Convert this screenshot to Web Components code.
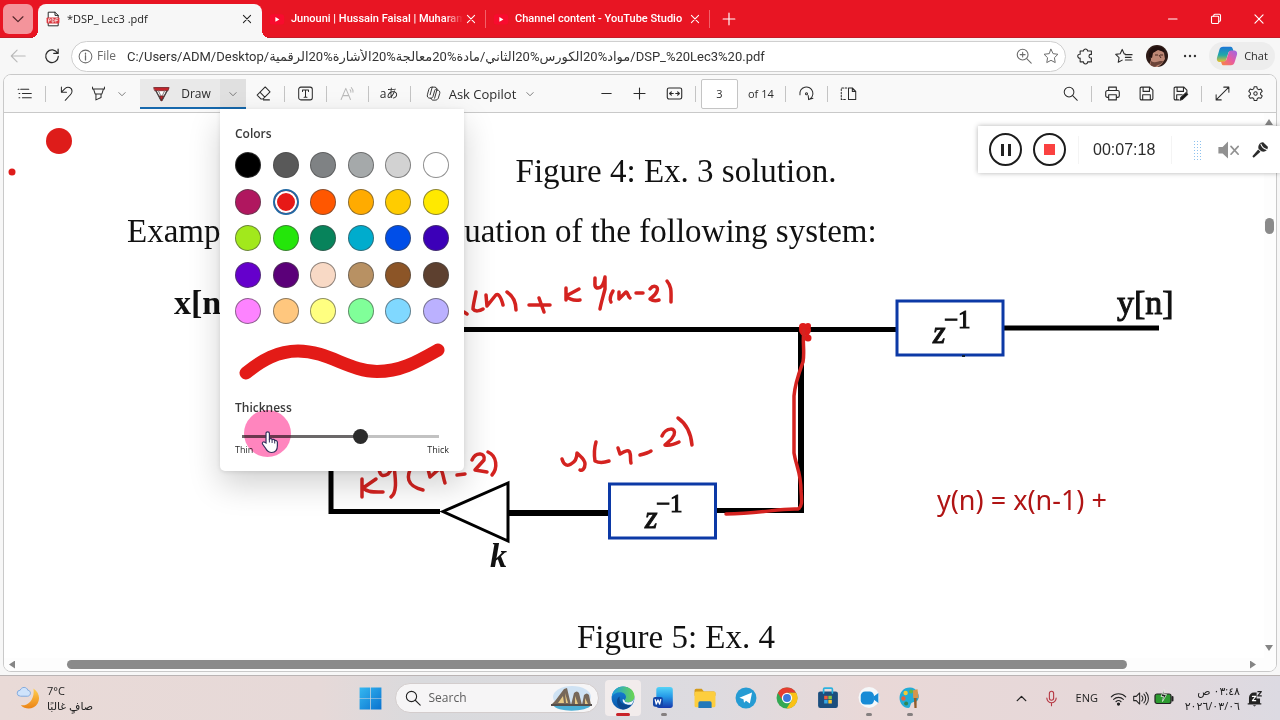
<!DOCTYPE html>
<html lang="en">
<head>
<meta charset="utf-8">
<meta name="viewport" content="width=device-width, initial-scale=1">
<title>DSP_ Lec3 .pdf</title>
<style>
  html, body { margin: 0; height: 100%; }
  body { font: 12px/16px "Open Sans", "Noto Sans", "DejaVu Sans", sans-serif; color: #2b2b2b; background: #f7f7f7; overflow: hidden; }
</style>
</head>
<body>
<browser-window></browser-window>
<script>
const RESET = `
  *, *::before, *::after { box-sizing: border-box; }
  button { font: inherit; color: inherit; background: none; border: 0; padding: 0; margin: 0; display: flex; align-items: center; justify-content: center; }
  input { font: inherit; color: inherit; margin: 0; }
`;
function define(name, css, html) {
  customElements.define(name, class extends HTMLElement {
    constructor() {
      super();
      this.attachShadow({ mode: 'open' });
    }
    connectedCallback() {
      if (this.shadowRoot.childNodes.length) return;
      const markup = typeof html === 'function' ? html(this) : html;
      this.shadowRoot.innerHTML = `<style>${RESET}${css}</style>${markup}`;
    }
  });
}

/* ---------- icons: inner SVG on a 20 x 20 grid ---------- */
const ICONS = {
  down: '<path d="M5.500 8 10 12.500 14.500 8" stroke="#666"/>',
  bigdown: '<path d="M4.500 7.500 10 13l5.500-5.500" stroke-width="1.300"/>',
  up: '<path d="M5 12.500 10 7.500l5 5" stroke-width="1.600"/>',
  close: '<path d="m5.500 5.500 9 9m0-9-9 9" stroke-width="1.300"/>',
  pdf: '<path d="M4.500 1.500h8l4 4v13h-12z" fill="#fff" stroke="#222"/><path d="M12.500 1.500v4h4"/><rect x="2" y="8" width="16" height="7.500" rx="1" fill="#d9383f" stroke="none"/><path d="M4.500 14V9.700h1.300a1.200 1.200 0 0 1 0 2.400H4.500M9 9.700V14h.8a1.700 1.700 0 0 0 1.700-1.700v-.9a1.700 1.700 0 0 0-1.700-1.700zM13.500 14V9.700h2.500m-2.500 2.200h2" stroke="#fff" stroke-width=".9"/>',
  yt: '<rect x="1" y="4" width="18" height="13" rx="4" fill="#f80b2e" stroke="none"/><path d="m8 7.500 5 3-5 3z" fill="#fff" stroke="none"/>',
  plus: '<path d="M10 3.500v13M3.500 10h13" stroke-width="1.300"/>',
  minus: '<path d="M4.500 10h11" stroke-width="1.300"/>',
  winmin: '<path d="M5 10h9.500"/>',
  restore: '<rect x="5" y="7" width="8" height="8" rx="1"/><path d="M7.500 7V6a1.200 1.200 0 0 1 1.200-1.200h5.100A1.200 1.200 0 0 1 15 6v5.300a1.200 1.200 0 0 1-1.200 1.200H13"/>',
  back: '<path d="M18 10H2.500M9 3.500 2.500 10 9 16.500"/>',
  refresh: '<path d="M16.200 7A7 7 0 1 0 17 10.500M16.800 2.500V7.200H12" stroke-width="1.400"/>',
  info: '<circle cx="10" cy="10" r="7.500"/><path d="M10 9v5M10 6v1.300" stroke-width="1.500"/>',
  zoomin: '<circle cx="8.500" cy="8.500" r="6"/><path d="m13 13 5 5M5.800 8.500h5.400M8.500 5.800v5.400"/>',
  star: '<path d="m10 2.500 2.300 4.900 5.400.7-3.900 3.800.9 5.400-4.700-2.500-4.700 2.500.9-5.400-3.900-3.800 5.400-.7z" stroke-width="1.100"/>',
  favs: '<path d="M11.500 7.700h-1.200L8 2.700 5.800 7.500l-5 .7 3.700 3.600-.9 5.200L8 14.600M11.500 8.500H19M11.500 11.500H18M11.500 14.500H19"/>',
  ext: '<path d="M3.500 4.500h3.700a2.300 2.300 0 1 1 4.600 0h4.200v3.700h-.7a2 2 0 1 0 0 4h.7v4.300h-4.200a2.300 2.300 0 1 1-4.600 0H3.500v-4.100a2.200 2.200 0 1 1 0-4.300z" stroke-width="1.200"/>',
  dots: '<g fill="#333" stroke="none"><circle cx="4.500" cy="10" r="1.300"/><circle cx="10" cy="10" r="1.300"/><circle cx="15.500" cy="10" r="1.300"/></g>',
  list: '<path d="M5.500 5H15M7.500 10H18M7.500 15H18M2.500 5h1M3.500 10h1M3.500 15h1" stroke-width="1.200"/>',
  undo: '<path d="M4 2.500V8.500h6M4.300 8.200 8.500 4c3-2.700 8-1 8 3.300 0 1.700-.8 3-2 4.200L8.500 18"/>',
  marker: '<path d="M3 2.500v2.200h14V2.500M4.200 4.800 6 10.500h8l1.800-5.700M7 10.500v7l6-2.700v-4.300"/>',
  pen: '<path d="M2 3.500h16L10.700 18H9.300z" fill="#fff"/><path d="M1 3h18l-1.300 3.700H2.300z" fill="#c4252c" stroke="#72262a" stroke-width=".8"/><path d="M7.700 13h4.600L10 18.500z" fill="#c4252c" stroke="#722"/><path d="M3.200 6.700 9 17.500M16.800 6.700 11 17.500" stroke="#514949"/><path d="M6.500 7 9 12.500M13.500 7 11 12.500" stroke="#8a8484"/>',
  eraser: '<path d="m12 2.300 5.700 5.700-8.500 8.500H7.200L2.500 11.800zM5.800 8.500l5.700 5.700M10 17.500h7"/>',
  text: '<rect x="2" y="2.500" width="16" height="15" rx="2.500"/><path d="M6.500 7.500V6h7v1.500M10 6v8.500M8.300 14.500h3.400"/>',
  read: '<path d="M2.500 17 8 4l5.500 13M4.500 12.500h7M13 5.500a4 4 0 0 1 1 3M14.500 3a7 7 0 0 1 2 5.500"/>',
  copilot: '<path d="M7 15.500H5.800C3.500 15.500 2.200 13.600 2.800 11.500l1.600-6C4.900 3.700 6.300 2.500 8.200 2.500h3.500c1 0 1.700.7 2 1.600l.6 2M7 15.500c1.300 0 2-.7 2.400-2l2-7c.4-1.300 1.200-2 2.500-2M14 6h.5c2.300 0 3.400 1.900 2.800 4l-1.600 5.200c-.5 1.700-1.900 2.600-3.700 2.600H9.500c-1.200 0-2-.7-2.300-1.800M8.500 2.500 6 11.500M13.900 6l-2.600 9.500" stroke-width="1.100"/>',
  fit: '<rect x="1.500" y="3.500" width="17" height="13" rx="2" stroke-width="1.300"/><path d="M8.500 10H4.500M6.300 8 4.300 10l2 2M11.500 10h4M13.700 8l2 2-2 2" stroke-width="1.400"/>',
  rotate: '<path d="M2.300 11.500A7.700 7.700 0 1 1 12.500 17.200M17.500 15.500l-5 1.700-.5-4.900" stroke-width="1.200"/><circle cx="10" cy="10.300" r="1.200"/>',
  pageview: '<path d="M10 3.500h4.500l4 4v9.500H10zM14.500 3.500v4h4"/><path d="M8 3.500H1.500V17H8" stroke-dasharray="2 1.800"/>',
  search: '<circle cx="8.300" cy="8.300" r="5.700"/><path d="m12.500 12.500 5.500 5.500"/>',
  print: '<path d="M5.500 6.500v-4h9v4M5.500 14.500H4A2 2 0 0 1 2 12.500V8.500a2 2 0 0 1 2-2h12a2 2 0 0 1 2 2v4a2 2 0 0 1-2 2h-1.500M5.500 11.500h9v6h-9z" stroke-width="1.300"/>',
  save: '<path d="M2.500 4a1.500 1.500 0 0 1 1.500-1.500h10L17.500 6v10a1.500 1.500 0 0 1-1.500 1.500H4A1.500 1.500 0 0 1 2.500 16zM6 2.500v5h7.500v-5M5.500 17.500v-6h9v6" stroke-width="1.300"/>',
  saveas: '<path d="M8 17.500H4A1.500 1.500 0 0 1 2.500 16V4A1.500 1.500 0 0 1 4 2.500h10L17.500 6v3M6 2.500v5h7.500v-5M5.500 17.500v-6h6.500" stroke-width="1.300"/><path d="m9.500 18 1-3.500 6-5.500 2 2-6 5.700z" fill="#111"/>',
  expand: '<path d="M11.500 2.500h6v6M17.500 2.500l-15 15M2.500 11.500v6h6" stroke-width="1.200"/>',
  gear: '<circle cx="10" cy="10" r="2"/><path d="m8.500 2-.6 2.500-1.700 1-2.500-.8-1.600 2.800 1.900 1.700v2l-1.900 1.700 1.600 2.800 2.500-.8 1.700 1 .6 2.400h3l.6-2.400 1.700-1 2.500.8 1.600-2.800-1.900-1.700v-2l1.900-1.700-1.600-2.800-2.500.8-1.700-1L11.500 2z"/>',
  chat: '<defs><linearGradient id="a" x1="0" y1="0" x2="0" y2="1"><stop stop-color="#1b75d8"/><stop offset=".55" stop-color="#20a9a8"/><stop offset="1" stop-color="#ecc229"/></linearGradient><linearGradient id="b" x1="1" y1="0" x2="0" y2="1"><stop stop-color="#9a67e8"/><stop offset=".5" stop-color="#e75aa0"/><stop offset="1" stop-color="#fb8839"/></linearGradient></defs><path d="M6.500 1.500h6.800c1.300 0 1.700 1 2.200 2.700l.4 1.300h-2.400c-1.300 0-2 .8-2.400 2l-1.800 6c-.5 1.300-1 2-2.400 2H3.600C1.300 15.500.300 13.500 1 11.300L3 4.500c.5-2 1.700-3 3.500-3z" fill="url(#a)" stroke="none"/><path d="M13.500 18.500H7c-1.300 0-1.700-1-2.200-2.700l-.2-.8h2.600c1.300 0 2-.8 2.400-2l1.800-6c.4-1.300 1-2 2.400-2h2.600c2.300 0 3.300 2 2.600 4.200l-2 6.300c-.6 2-1.700 3-3.500 3z" fill="url(#b)" stroke="none"/>',
  start: '<defs><linearGradient id="w" x1="0" y1="0" x2="1" y2="1"><stop stop-color="#35b8f1"/><stop offset="1" stop-color="#0a72cf"/></linearGradient></defs><path d="M.500.500h9.200v9.200H.500zM10.300.500h9.200v9.200h-9.200zM.500 10.300h9.200v9.200H.500zM10.300 10.300h9.200v9.200h-9.200z" fill="url(#w)" stroke="none"/>',
  edge: '<defs><linearGradient id="e" x1="0" x2="1"><stop stop-color="#1b9de2"/><stop offset="1" stop-color="#6cd64e"/></linearGradient><linearGradient id="f" x1="0" y1="0" x2="0" y2="1"><stop stop-color="#1787db"/><stop offset="1" stop-color="#0b55a8"/></linearGradient></defs><g stroke="none"><circle cx="10" cy="10" r="9.500" fill="url(#f)"/><path d="M.7 9C1.300 4 5.200.5 10 .500c5.500 0 9.500 3.700 9.500 8 0 3-2.300 5-5 5-2 0-3.200-.8-3.200-1.700 0-.8 1.200-1 1.200-2.700 0-2.100-2-3.900-5-3.900C4.500 5.200 2 6.500.7 9z" fill="url(#e)"/><path d="M7.300 8.800c-1.200 4.200 2.300 8.300 9.900 6.600-1.600 2.500-4.500 4.100-7.200 4.100-3-.4-5-3.500-5-6.500 0-2 .8-3.500 2.300-4.200z" fill="#0c488f"/><path d="M19.300 10.500c-.5 2-2.500 3.200-4.800 3.200-2 0-3.200-.8-3.200-1.900l-1.400-1c-1 3.500 3.500 5.500 7.300 4.600 1.200-1.400 2-3.100 2.100-4.900z" fill="#eef6fa"/></g>',
  word: '<defs><linearGradient id="wd" x1="0" y1="0" x2="0" y2="1"><stop stop-color="#54d3f7"/><stop offset=".45" stop-color="#269be8"/><stop offset="1" stop-color="#1739ac"/></linearGradient></defs><rect x="3" y="0" width="15" height="19" rx="2.500" fill="url(#wd)" stroke="none"/><rect x="0" y="9" width="9" height="9" rx="2" fill="#1446a7" stroke="none"/><path d="m2 11.500 1 4 1.500-3.700L6 15.500l1-4" stroke="#fff" stroke-width="1.200"/>',
  folder: '<g stroke="none"><path d="M.5 3a1.500 1.500 0 0 1 1.500-1.500h5L9 4h9a1.500 1.500 0 0 1 1.500 1.500V8H.5z" fill="#d59b19"/><rect x=".5" y="4" width="19" height="14.500" rx="1.500" fill="#fdce3e"/><path d="M4 19v-4.500A1.500 1.500 0 0 1 5.500 13h9a1.500 1.500 0 0 1 1.500 1.500V19z" fill="#2278b9"/></g>',
  telegram: '<circle cx="10" cy="10" r="9.500" fill="#259bd3" stroke="none"/><path d="M4 9.700 15.500 5l-2 10-3.500-2.400-1.800 1.800-.5-3.200z" fill="#fff" stroke="none"/>',
  chrome: '<g stroke="none"><circle cx="10" cy="10" r="9.500" fill="#34a853"/><path d="M10 .500a9.500 9.500 0 0 1 8.200 4.700H10L6 12 1.700 5.400A9.500 9.500 0 0 1 10 .500z" fill="#e53d30"/><path d="M18.300 5.300a9.500 9.500 0 0 1-8.700 14.200l4.500-7.100c.8-1.700.4-5-2.600-7.100z" fill="#fbc116"/><circle cx="10" cy="10" r="4.700" fill="#fff"/><circle cx="10" cy="10" r="3.600" fill="#3c79dd"/></g>',
  store: '<rect x="1" y="4" width="18" height="15" rx="2" fill="#1b4e7e" stroke="none"/><path d="M6 5.500V2a1 1 0 0 1 1-1h6a1 1 0 0 1 1 1v3.500" stroke="#2cb2df" stroke-width="1.500"/><g stroke="none"><path d="M6.500 8h3.200v3.200H6.500z" fill="#f05a3b"/><path d="M10.300 8h3.200v3.200h-3.200z" fill="#8cc43f"/><path d="M6.500 11.800h3.200V15H6.500z" fill="#34a8e6"/><path d="M10.300 11.800h3.200V15h-3.200z" fill="#fdc62e"/></g>',
  recorder: '<circle cx="10" cy="9.500" r="9.500" fill="#f5f8fa" stroke="none"/><rect x="2.500" y="4" width="12" height="12" rx="4" fill="#178bd6" stroke="none"/><path d="m14.500 8.500 4-3v9l-4-3z" fill="#178bd6" stroke="none"/>',
  paint: '<path d="M10 .500C4 .500.500 5 .500 10c0 5 3.500 9 8 9 2 0 1.500-2.500 2.500-4 1.500-2 4.500-1 6-3C20 8 16 .500 10 .500z" fill="#22acd6" stroke="none"/><g stroke="none"><circle cx="6" cy="5.500" r="2" fill="#f4cb37"/><circle cx="11" cy="4" r="1.800" fill="#67b743"/><circle cx="4" cy="10.500" r="2" fill="#e7603c"/><circle cx="6.500" cy="15" r="1.800" fill="#2d8754"/><path d="M13.500 9h2.500v10h-2z" fill="#925d2b"/><path d="m12.800 3 4-1 1 8h-5z" fill="#d6954b"/></g>',
  mic: '<rect x="7.500" y="1.500" width="5" height="10.500" rx="2.500" stroke="#b63843" stroke-width="1.300"/><path d="M4.500 9.500a5.500 5.500 0 0 0 11 0M10 15v3.500" stroke="#b63843" stroke-width="1.300"/>',
  wifi: '<path d="M1.500 8a12 12 0 0 1 17 0M4.300 11a8.200 8.200 0 0 1 11.400 0M7 13.800a4.300 4.300 0 0 1 6 0" stroke-width="1.300"/><circle cx="10" cy="16.500" r="1.300" fill="#222"/>',
  sound: '<path d="M2 7.500v5h3l4 4v-13l-4 4zM11.500 7a4.500 4.500 0 0 1 0 6M14 4.800a7.500 7.500 0 0 1 0 10.400M16.500 2.800a10.500 10.500 0 0 1 0 14.400" stroke-width="1.200"/>',
  battery: '<rect x="1" y="6" width="16" height="9.500" rx="2" fill="#2d9b31" stroke="#222"/><path d="M18.500 9v3.500" stroke-width="2"/><path d="m10 2-3 6.500h2.500l-1 5 4-7H10z" fill="#222" stroke="#dff0df" stroke-width=".8"/>',
  bell: '<path d="M3.500 15.500V9a6 6 0 0 1 6-6h3v7h4v5.500h1.500v1.500H2v-1.500zM8 18h4l-2 1.500z" fill="#222" stroke="none"/><path d="M14 2h4l-4 5h4" stroke-width="1.500"/><path d="M7.500 7.500h4l-4 5h4" stroke="#fff"/>',
  moon: '<defs><linearGradient id="m" x1="0" y1="0" x2="0" y2="1"><stop stop-color="#ffcf51"/><stop offset="1" stop-color="#ec8415"/></linearGradient></defs><path d="M14.500 2c4.500 3 6 8 3.500 12.500-3 5-10 5.500-14 1.500 6 1 12-5 10.500-14z" fill="url(#m)" stroke="none"/><path d="M3.500 8.500a2.500 2.500 0 0 1 0-5C4.500.500 9 .300 9.800 3.500c3 .2 3 4.800 0 5z" fill="#cfe3fb" stroke="#7fa8de" stroke-width=".8"/>',
  mute: '<path d="M2 7.500v5.500h3.500l4.500 4v-14L5.500 7.500z" fill="#919191" stroke="none"/><path d="m12.500 7 6 6.500m0-6.500-6 6.500" stroke="#919191" stroke-width="1.400"/>',
  recmic: '<path d="M8.500 9C7 5 10 1 13.500 1.300l5.200 5.200c.3 3.500-3.200 6.500-7.200 5z" fill="#2b2b2b" stroke="none"/><path d="M11 3.500c1 3 3 5 6.500 6" stroke="#fff"/><path d="m8 9.500 2.500 2.500L3 18.500 1.500 17z" fill="#2b2b2b" stroke="none"/>'
};
define('ui-icon', `:host { display: block; flex: none; width: var(--icon, 18px); height: var(--icon, 18px); } svg { display: block; width: 100%; height: 100%; }`,
  el => `<svg viewBox="0 0 20 20" fill="none" stroke="currentColor" stroke-width="1.200" stroke-linecap="round" stroke-linejoin="round" aria-hidden="true">${ICONS[el.getAttribute('name')]}</svg>`);

/* ---------- tab strip ---------- */
define('browser-tab', `
  :host { display: flex; position: relative; align-items: center; width: 224px; height: 34px; padding: 0 7px 4px 7px; color: #fff; --icon: 16px; }
  .title { flex: 1; min-width: 0; overflow: hidden; white-space: nowrap; text-align: left; justify-content: flex-start; font: 500 11px/16px Roboto, "Open Sans", sans-serif; padding-left: 6px; }
  :host([clipped]) .title { -webkit-mask-image: linear-gradient(90deg, #000 90%, transparent); }
  :host::after { content: ""; position: absolute; right: 0; top: 6px; width: 1px; height: 18px; background: #f2616a; }
  :host([active]) { background: #f7f7f7; color: #222; border-radius: 8px 8px 0 0; }
  :host([active]) .title { font: inherit; font-size: 11px; }
  :host([active])::before, :host([active])::after { content: ""; position: absolute; top: auto; bottom: 0; width: 8px; height: 8px; background: radial-gradient(circle at 0 0, transparent 8px, #f7f7f7 8px); }
  :host([active])::before { left: -8px; }
  :host([active])::after { right: -8px; transform: scaleX(-1); }
`, el => `<ui-icon name="${el.getAttribute('icon')}"></ui-icon><button class="title"><slot></slot></button><button aria-label="Close tab"><ui-icon name="close"></ui-icon></button>`);

define('tab-strip', `
  :host { display: flex; align-items: flex-start; height: 38px; padding-top: 4px; background: #e81523; color: #fff; box-shadow: inset 0 -1px #c51b27; }
  .all { width: 30px; height: 30px; margin: 0 5px 0 3px; border-radius: 6px; background: #f4949b; color: #52262a; }
  .new { width: 38px; height: 30px; }
  .controls { display: flex; margin-left: auto; }
  .controls button { width: 43px; height: 30px; }
`, `<button class="all" aria-label="Tab actions"><ui-icon name="bigdown"></ui-icon></button>
  <browser-tab active icon="pdf">*DSP_ Lec3 .pdf</browser-tab>
  <browser-tab clipped icon="yt">Junouni | Hussain Faisal | Muharam</browser-tab>
  <browser-tab icon="yt">Channel content - YouTube Studio</browser-tab>
  <button class="new" aria-label="New tab"><ui-icon name="plus"></ui-icon></button>
  <div class="controls"><button aria-label="Minimize"><ui-icon name="winmin"></ui-icon></button><button aria-label="Restore"><ui-icon name="restore"></ui-icon></button><button aria-label="Close"><ui-icon name="close"></ui-icon></button></div>`);

/* ---------- address row ---------- */
define('address-bar', `
  :host { display: flex; align-items: center; height: 36px; padding: 0 5px 0 1px; background: #f7f7f7; }
  .nav { width: 34px; height: 30px; }
  .nav.off { color: #b9b9b9; }
  form { flex: 1; display: flex; align-items: center; height: 31px; border: 1px solid #cfcfcf; border-radius: 16px; background: #fff; padding: 0 1px 0 5px; color: #6b6b6b; margin: 0 0 0 2px; }
  form button { width: 27px; height: 28px; }
  form .site { width: auto; gap: 3px; --icon: 17px; }
  input { flex: 1; min-width: 0; border: 0; outline: 0; background: none; color: #333; font: 13px Roboto, "Open Sans", "DejaVu Sans", sans-serif; padding: 0 0 0 11px; }
  .tools { display: flex; align-items: center; margin-left: 1px; }
  .tools button { width: 38px; height: 30px; }
  .tools .me { width: 28px; }
  .me svg { width: 22px; height: 22px; }
  .tools .chat { width: 66px; height: 28px; border-radius: 14px; background: #ededed; gap: 6px; --icon: 22px; font-size: 11px; }
`, `<button class="nav off" aria-label="Back"><ui-icon name="back"></ui-icon></button>
  <button class="nav" aria-label="Refresh"><ui-icon name="refresh"></ui-icon></button>
  <form><button class="site" type="button"><ui-icon name="info"></ui-icon>File</button>
    <input type="text" dir="ltr" aria-label="Address" value="C:/Users/ADM/Desktop/مواد%20الكورس%20الثاني/مادة%20معالجة%20الأشارة%20الرقمية/DSP_%20Lec3%20.pdf">
    <button type="button" aria-label="Zoom"><ui-icon name="zoomin"></ui-icon></button><button type="button" aria-label="Add to favorites"><ui-icon name="star"></ui-icon></button></form>
  <div class="tools">
    <button aria-label="Extensions"><ui-icon name="ext"></ui-icon></button><button aria-label="Favorites"><ui-icon name="favs"></ui-icon></button>
    <button class="me" aria-label="Profile"><svg viewBox="0 0 22 22"><defs><clipPath id="c"><circle cx="11" cy="11" r="11"/></clipPath></defs><g clip-path="url(#c)"><path d="M0 0h22v22H0z" fill="#2e1b17"/><path d="M3 22c0-4 2-5 2-8L4 8c3-7 11-5 14 0l1 6-2 3c-1 3-4 3-6 6z" fill="#bd8775"/><path d="M3 12C2 3 9 0 14 2c4 1 5 4 4 5l-6-2-5 3-1 5z" fill="#21100f"/><path d="M5 16c3 2 6 1 9 0h3c-1 4-5 3-8 6H4z" fill="#6b4338"/><path d="M9 10h3M14 10h3M13 10l2 3" stroke="#4b2a25" stroke-width="1"/></g></svg></button>
    <button aria-label="Settings and more"><ui-icon name="dots"></ui-icon></button>
    <button class="chat"><ui-icon name="chat"></ui-icon>Chat</button>
  </div>`);

/* ---------- PDF toolbar ---------- */
define('tool-divider', `:host { display: flex; flex: none; width: 12px; justify-content: center; } i { width: 1px; height: 16px; background: #c4c4c4; }`, '<i></i>');
define('pdf-toolbar', `
  :host { display: flex; align-items: center; height: 38px; padding: 0 6px 0 5px; background: #f9f9f9; border-bottom: 1px solid #c9c9c9; --icon: 17px; }
  div { display: flex; align-items: center; }
  button { width: 30px; height: 30px; }
  .chevron { width: 18px; --icon: 14px; }
  .draw { width: 106px; height: 30px; background: #e9e9e9; box-shadow: inset 0 -2px #1668ac; margin: 0 2px 0 9px; }
  .draw .pick { width: 80px; gap: 11px; padding-left: 4px; }
  .draw .more { width: 26px; --icon: 14px; background: #e0e0e0; box-shadow: inset 0 -2px #1668ac; }
  .ask { width: 122px; gap: 7px; margin: 0 0 0 4px; font-size: 13px; }
  .ask ui-icon:last-child { --icon: 14px; }
  .off { color: #bababa; }
  .lang { font-family: "Open Sans", "Noto Sans CJK JP", sans-serif; }
  .pages { margin-left: 49px; }
  .pages input { width: 37px; height: 30px; border: 1px solid #c4c4c4; border-radius: 2px; text-align: center; background: #fff; padding: 0; font-size: 11px; }
  .total { width: 41px; padding-left: 10px; font-size: 11px; white-space: nowrap; }
  .end { margin-left: auto; }
`, `<div>
    <button aria-label="Contents"><ui-icon name="list"></ui-icon></button><tool-divider></tool-divider>
    <button aria-label="Undo"><ui-icon name="undo"></ui-icon></button>
    <button aria-label="Highlight" style="margin-left:2px"><ui-icon name="marker"></ui-icon></button><button class="chevron" aria-label="Highlight colors"><ui-icon name="down"></ui-icon></button>
    <div class="draw"><button class="pick"><ui-icon name="pen"></ui-icon>Draw</button><button class="more" aria-label="Draw options"><ui-icon name="down"></ui-icon></button></div>
    <button aria-label="Erase"><ui-icon name="eraser"></ui-icon></button><tool-divider></tool-divider>
    <button aria-label="Add text"><ui-icon name="text"></ui-icon></button><tool-divider></tool-divider>
    <button class="off" aria-label="Read aloud"><ui-icon name="read"></ui-icon></button><tool-divider></tool-divider>
    <button class="lang" aria-label="Translate">aあ</button><tool-divider></tool-divider>
    <button class="ask"><ui-icon name="copilot"></ui-icon>Ask Copilot<ui-icon name="down"></ui-icon></button>
  </div>
  <div class="pages">
    <button aria-label="Zoom out"><ui-icon name="minus"></ui-icon></button>
    <button aria-label="Zoom in" style="margin:0 5px 0 3px"><ui-icon name="plus"></ui-icon></button>
    <button aria-label="Fit to width"><ui-icon name="fit"></ui-icon></button><tool-divider></tool-divider>
    <input type="text" aria-label="Page" value="3"><span class="total">of 14</span><tool-divider></tool-divider>
    <button aria-label="Rotate"><ui-icon name="rotate"></ui-icon></button><tool-divider></tool-divider>
    <button aria-label="Page view"><ui-icon name="pageview"></ui-icon></button>
  </div>
  <div class="end">
    <button aria-label="Find"><ui-icon name="search"></ui-icon></button><tool-divider></tool-divider>
    <div style="gap:4px"><button aria-label="Print"><ui-icon name="print"></ui-icon></button><button aria-label="Save"><ui-icon name="save"></ui-icon></button><button aria-label="Save as"><ui-icon name="saveas"></ui-icon></button></div><tool-divider></tool-divider>
    <div style="gap:3px"><button aria-label="Full screen"><ui-icon name="expand"></ui-icon></button><button aria-label="Settings"><ui-icon name="gear"></ui-icon></button></div>
  </div>`);

/* ---------- draw options ---------- */
const PALETTE = [
  ['Black', '#000000'], ['Dark gray', '#595959'], ['Gray', '#7f8284'], ['Silver', '#a5a9aa'], ['Light gray', '#d2d2d2'], ['White', '#ffffff'],
  ['Magenta', '#b0175f'], ['Red', '#e71917'], ['Orange', '#ff5700'], ['Amber', '#ffab00'], ['Gold', '#ffcc00'], ['Yellow', '#ffe900'],
  ['Lime', '#a2e81c'], ['Green', '#24e60a'], ['Teal', '#07835b'], ['Cyan', '#00accd'], ['Blue', '#004ee8'], ['Indigo', '#3c00b8'],
  ['Violet', '#6500cc'], ['Purple', '#5b0079'], ['Peach', '#f8d9c5'], ['Tan', '#b89163'], ['Brown', '#8c5527'], ['Dark brown', '#5d402f'],
  ['Pink', '#fd83ff'], ['Light orange', '#ffc77e'], ['Light yellow', '#ffff80'], ['Mint', '#80ff99'], ['Sky', '#80d8ff'], ['Lavender', '#bbb1ff']
];
define('ink-options', `
  :host { display: block; width: 244px; height: 362px; padding: 17px 15px 0; background: #fff; border-radius: 0 0 5px 5px; box-shadow: 0 14px 32px rgba(0,0,0,.18), 0 1px 4px rgba(0,0,0,.1); position: relative; }
  h2 { margin: 0; font-size: 12px; line-height: 16px; font-weight: 600; color: #3a3a3a; }
  fieldset { border: 0; margin: 10px 0 0; padding: 0; height: 172px; display: grid; grid-template-columns: repeat(6, 26px); grid-auto-rows: 26px; justify-content: space-between; align-content: space-between; }
  input[type=radio] { appearance: none; width: 26px; height: 26px; border-radius: 50%; background: var(--c); border: 1px solid rgba(70,70,70,.6); }
  input[type=radio]:checked { border: 2px solid #2269a4; box-shadow: inset 0 0 0 2px #fff; }
  .sample { display: block; width: 214px; height: 52px; margin: 12px 0; }
  input[type=range] { display: block; appearance: none; width: 197px; height: 16px; margin: 12px 0 0 7px; background: linear-gradient(90deg, #6b6869 60%, #c2c2c2 60%) center / 100% 3px no-repeat; }
  input[type=range]::-webkit-slider-thumb { appearance: none; width: 15px; height: 15px; border-radius: 50%; background: #2b2b2b; }
  .ends { display: flex; justify-content: space-between; font-size: 9px; line-height: 12px; }
  .touch { position: absolute; left: 24px; top: 301px; width: 47px; height: 47px; border-radius: 50%; background: #ff85be; mix-blend-mode: multiply; }
  .hand { position: absolute; left: 39px; top: 321px; width: 21px; height: 24px; }
`, `<h2>Colors</h2>
  <fieldset aria-label="Colors">${PALETTE.map(([n, c]) => `<input type="radio" name="ink" aria-label="${n}" style="--c:${c}"${n === 'Red' ? ' checked' : ''}>`).join('')}</fieldset>
  <svg class="sample" viewBox="235 336 214 52" fill="none" aria-hidden="true"><path d="M246 373C262 360 278 351 298 351 328 351 350 371.500 377 371.500 400 371.500 415 363 438 350" stroke="#e31b17" stroke-width="13" stroke-linecap="round"/></svg>
  <h2><label for="t">Thickness</label></h2>
  <input id="t" type="range" min="0" max="100" value="61">
  <div class="ends"><span>Thin</span><span>Thick</span></div>
  <div class="touch"></div>
  <svg class="hand" viewBox="0 0 21 24" aria-hidden="true"><path d="M7 13V3.500a1.700 1.700 0 0 1 3.400 0V9c1-.8 2.300-.4 2.700.6 1-.6 2.300-.2 2.600.9 1.300-.5 2.700.3 2.700 1.800v3.500c0 4-2 6.700-5.700 6.700-3.200 0-4.500-1.200-6-4L3.500 14c-.7-1.600 1-2.800 2.300-1.800z" fill="#fff" stroke="#35305c" stroke-width="1.200"/><path d="M10.400 9v3.500M13.100 10v3M15.700 11v2.500" stroke="#35305c"/></svg>`);

/* ---------- PDF page ---------- */
define('flow-diagram', `
  :host { display: block; } svg { display: block; width: 100%; overflow: visible; }
  text { font-family: "Liberation Serif", serif; fill: #111; }
  .b { font-weight: 700; } .i { font-style: italic; } .typed { font-family: "Noto Sans", sans-serif; fill: #b01414; font-size: 27px; }
`, `<svg viewBox="4 251 1260 360" fill="none" role="img" aria-label="Recursive system with two delays and gain k">
  <g stroke="#000" stroke-width="5">
    <path d="M220 329.500H897M331 329V511.500H440"/><path d="M1003 328H1159"/>
    <path d="M801 327V513" stroke-width="6"/><path d="M716 510.500H804"/><path d="M509 513H609" stroke-width="6"/>
    <path d="M443 511.500 508 483V541Z" stroke-width="3" fill="#fff"/>
  </g>
  <g stroke="#0c39a6" stroke-width="3" fill="#fff"><rect x="897" y="301" width="106" height="54"/><rect x="609.500" y="484" width="106" height="54"/></g>
  <path d="M962 356h3" stroke="#123" stroke-width="2"/>
  <text class="b" x="174" y="314" font-size="34">x[n]</text><text x="1117" y="314" font-size="34" stroke="#111">y[n]</text>
  <text class="i" x="933" y="343" font-size="32" stroke="#111">z</text><text x="944" y="328" font-size="25" stroke="#111">−1</text>
  <text class="i" x="645" y="528" font-size="32" stroke="#111">z</text><text x="656" y="512" font-size="25" stroke="#111">−1</text>
  <text class="i b" x="490" y="567" font-size="34">k</text>
  <text class="typed" x="937" y="510">y(n) = x(n-1) +</text>
  <g fill="#de1c1a"><circle cx="59" cy="141" r="13"/><circle cx="12" cy="172" r="3.500"/><circle cx="805" cy="330" r="6"/><circle cx="803" cy="327" r="4"/><circle cx="808" cy="326" r="3"/><circle cx="808" cy="338" r="3.500"/></g>
  <g stroke="#d42320" stroke-width="3.500" stroke-linecap="round" stroke-linejoin="round">
    <path d="M804 330C802 340 805 352 803 362 799 373 795 383 794 396V453C796 466 801 472 801 491 802 502 802 507 798 509 778 508 762 514 726 514"/>
    <path d="M464 312l3 2M476 292c-1 6-3 13-3 17 2 3 7 2 10 0M486 295l1 11 8-10c3-4 6 1 8 9M507 292c6 4 9 11 9 18"/>
    <path d="M529 305c8 0 14 0 21 0M539 298l5 14"/>
    <path d="M566 288v12M579 289l-13 7c4 4 8 5 14 4M595 278c0 6-1 10 3 10 4 0 6-5 7-11v12c-2 8-4 14-5 20"/>
    <path d="M613 291c-3 5-4 8-2 11M619 292v7l7-7c2 0 2 5 4 6M636 293h7M650 289c4-5 9-2 7 2-1 4-5 6-7 8 3 2 6 2 9 1M667 281c5 6 4 11 4 21"/>
    <path d="M562 459c2 7 6 7 9 5 4-2 6-6 6-11 3 3 8 6 8 11 0 5-3 7-5 6M596 442c-2 7-2 13-1 19 4 2 8 2 14 0M618 448l2 6c5-3 9-5 10-1 1 3 0 6 1 10M640 455c4-1 8-2 11-4M662 436c4-9 15-9 12-1-2 5-6 7-9 10 5 1 10-1 14-3M678 418c10 7 13 16 14 27"/>
    <path d="M362 479v18M376 479l-13 9c5 5 13 4 20 4M379 469c1 7 4 8 9 5l6-8c1 10 4 26-3 31M412 466c-6 10-6 20 11 24M428 469l2 8 8-7c5-3 5 8 7 13M457 475l8-1M472 460c4-9 14-7 12 0l-9 10 12 2M488 452c9 4 10 16 4 23"/>
  </g></svg>`);
define('pdf-page', `
  :host { display: block; overflow: hidden; padding-top: 38px; color: #111; font: 33px/40px "Liberation Serif", serif; background: #fff; }
  p { margin: 0; white-space: nowrap; }
  .caption { text-align: center; padding-left: 84px; }
  .task { margin: 20px 0 0 123px; }
  .last { margin-top: 6px; }
`, `<p class="caption">Figure 4: Ex. 3 solution.</p>
  <p class="task">Example 4: Derive the equation of the following system:</p>
  <flow-diagram></flow-diagram><p class="caption last">Figure 5: Ex. 4</p>`);

define('scroll-track', `
  :host { display: flex; align-items: center; background: #fdfdfd; }
  :host([vertical]) { flex-direction: column; }
  i { flex: none; width: 6px; height: 8px; background: #858585; clip-path: polygon(100% 0, 0 50%, 100% 100%); }
  i:last-child { clip-path: polygon(0 0, 100% 50%, 0 100%); }
  :host([vertical]) i { width: 8px; height: 6px; clip-path: polygon(0 100%, 50% 0, 100% 100%); }
  :host([vertical]) i:last-child { clip-path: polygon(0 0, 50% 100%, 100% 0); }
  div { flex: 1; align-self: stretch; display: grid; align-items: center; justify-items: center; }
  b { background: #8a8a8a; border-radius: 5px; }
  :host(:not([vertical])) div { grid-template-columns: 52fr 1058fr 123fr; }
  :host(:not([vertical])) b { grid-column: 2; height: 9px; width: 100%; }
  :host([vertical]) div { grid-template-rows: 92fr 16px 408fr; }
  :host([vertical]) b { grid-row: 2; width: 9px; height: 16px; }
`, '<i></i><div><b></b></div><i></i>');

define('pdf-viewer', `
  :host { display: grid; position: relative; grid-template: auto 1fr 13px / 1fr 12px; border: 1px solid #c9c9c9; border-radius: 8px; overflow: hidden; background: #fff; }
  pdf-toolbar { grid-column: 1 / 3; }
  pdf-page { min-width: 0; min-height: 0; }
  .v { padding: 6px 2px 7px 0; }
  .h { grid-column: 1 / 3; padding: 0 20px 0 5px; }
  ink-options { position: absolute; left: 216px; top: 34px; }
`, `<pdf-toolbar></pdf-toolbar><pdf-page></pdf-page><scroll-track class="v" vertical></scroll-track><scroll-track class="h"></scroll-track><ink-options></ink-options>`);

/* ---------- floating recorder ---------- */
define('screen-recorder', `
  :host { position: fixed; right: 0; top: 126px; width: 302px; height: 47px; display: flex; align-items: center; background: #fff; box-shadow: 0 0 5px rgba(0,0,0,.3); padding: 0 9px 0 11px; }
  .round { width: 33px; height: 33px; border: 2px solid #1c1c1c; border-radius: 50%; gap: 4px; margin-right: 11px; }
  .round i { width: 3px; height: 12px; background: #222; }
  .round b { width: 11px; height: 11px; background: #fa4140; }
  .time { font: 16px/20px "Liberation Sans", sans-serif; border: solid #f4f4f4; border-width: 0 1px; padding: 4px 17px 4px 14px; width: 94px; margin-left: 1px; }
  .level { width: 9px; height: 20px; margin: 0 14px 0 21px; background: radial-gradient(#8ec2ee 1px, transparent 1px) 0 0 / 3px 3px; }
  .snd { --icon: 24px; margin-right: 11px; } .mic { --icon: 18px; }
`, `<button class="round" aria-label="Pause"><i></i><i></i></button><button class="round" aria-label="Stop"><b></b></button><span class="time">00:07:18</span><span class="level"></span>
  <button class="snd" aria-label="Sound off"><ui-icon name="mute"></ui-icon></button><button class="mic" aria-label="Microphone"><ui-icon name="recmic"></ui-icon></button>`);

/* ---------- taskbar ---------- */
define('task-app', `
  :host { display: flex; width: 36px; height: 36px; --icon: 22px; position: relative; border-radius: 4px; }
  button { flex: 1; }
  :host([active]) { background: #f2ecec; --icon: 24px; }
  :host([running])::after, :host([active])::after { content: ""; position: absolute; left: 15px; bottom: 0; width: 6px; height: 3px; border-radius: 2px; background: #858080; }
  :host([active])::after { left: 11px; width: 14px; background: #c82229; }
`, el => `<button aria-label="${el.getAttribute('label')}"><ui-icon name="${el.getAttribute('icon')}"></ui-icon></button>`);
define('task-bar', `
  :host { display: grid; grid-template-columns: 1fr auto 1fr; align-items: center; height: 45px; border-top: 1px solid #bab4b4; background: linear-gradient(90deg, #e9dad7, #e6d9d8 25%, #d9dadd 33%, #dddbe0 55%, #e9d8d7 68%, #e6d8d9 85%, #dcdae2); color: #222; }
  .weather { justify-content: flex-start; gap: 7px; padding-left: 16px; --icon: 24px; font-size: 11px; line-height: 15px; text-align: left; }
  .weather span { display: block; }
  .apps { display: flex; align-items: center; gap: 6px; }
  .run { display: flex; gap: 5px; }
  .start { --icon: 23px; width: 36px; height: 36px; }
  .find { display: flex; align-items: center; width: 204px; height: 30px; border-radius: 15px; background: #f6f5f6; border: 1px solid #d3cdcd; padding: 0 4px 0 8px; gap: 7px; }
  .find input { flex: 1; width: 0; border: 0; background: none; outline: 0; padding: 0; }
  .find input::placeholder { color: #5d5d5d; }
  .find svg { width: 44px; height: 26px; }
  .tray { display: flex; align-items: center; justify-content: flex-end; padding-right: 17px; }
  .tray button { height: 30px; --icon: 17px; }
  .lang { font-size: 11px; margin: 0 12px 0 16px; }
  .quick { gap: 5px; } .quick :last-child { --icon: 20px; }
  .clock { flex-direction: column; align-items: flex-start; text-align: right; font-size: 11px; line-height: 15px; width: 66px; margin-right: 6px; }
`, `<button class="weather"><ui-icon name="moon"></ui-icon><span><span>7°C</span><span dir="rtl" lang="ar">صافٍ غالبًا</span></span></button>
  <div class="apps"><button class="start" aria-label="Start"><ui-icon name="start"></ui-icon></button>
    <label class="find"><ui-icon name="search"></ui-icon><input type="search" placeholder="Search" aria-label="Search">
      <svg viewBox="0 0 44 26" aria-hidden="true"><ellipse cx="22" cy="12" rx="19" ry="11" fill="#cfe2f3"/><path d="M3 20h38c-3 7-34 8-38 0z" fill="#4bafd5"/><path d="m1 20 4-4 9-12 3-1 4 17zM21 20l3-12q3-3 5 0l3 12zM32 20l2-10q3-3 5 0l2 10z" fill="#76685a"/><path d="m8 18 5-7 1 7zM16 18l-1-10 3 10zM25 19v-8l3 8zM35 19v-6l3 6z" fill="#e7ca85"/><path d="M1 20h41" stroke="#55504d" stroke-width="2"/></svg></label>
    <div class="run"><task-app active icon="edge" label="Edge"></task-app><task-app running icon="word" label="Word"></task-app><task-app icon="folder" label="Explorer"></task-app><task-app icon="telegram" label="Telegram"></task-app><task-app icon="chrome" label="Chrome"></task-app><task-app icon="store" label="Store"></task-app><task-app running icon="recorder" label="Recorder"></task-app><task-app running icon="paint" label="Paint"></task-app></div></div>
  <div class="tray"><button aria-label="Hidden icons"><ui-icon name="up"></ui-icon></button><button aria-label="Microphone in use" style="margin-left:13px"><ui-icon name="mic"></ui-icon></button><button class="lang">ENG</button>
    <button class="quick" aria-label="Network, sound, battery"><ui-icon name="wifi"></ui-icon><ui-icon name="sound"></ui-icon><ui-icon name="battery"></ui-icon></button>
    <button class="clock" dir="rtl" lang="ar"><span>٠٣:٤٨ ص</span><span>٢٠٢٦/٠٣/٠٦</span></button><button aria-label="Notifications"><ui-icon name="bell"></ui-icon></button></div>`);

define('browser-window', `
  :host { display: flex; flex-direction: column; height: 100vh; }
  pdf-viewer { flex: 1; min-height: 0; margin: 0 3px 3px; }
`, `<tab-strip></tab-strip><address-bar></address-bar><pdf-viewer></pdf-viewer><task-bar></task-bar><screen-recorder></screen-recorder>`);
</script>
</body>
</html>
